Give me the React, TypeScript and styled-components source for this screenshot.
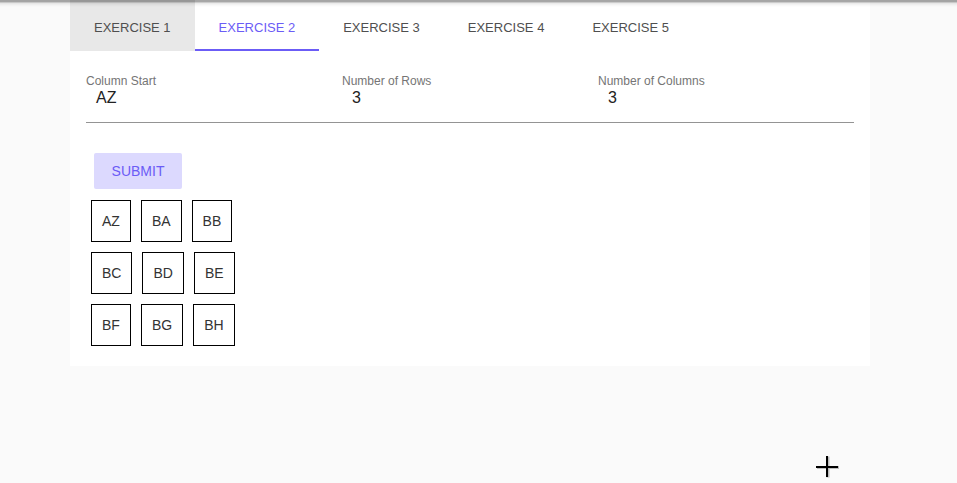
import React, { useState } from "react";
import styled, { createGlobalStyle } from "styled-components";

const GlobalStyle = createGlobalStyle`
  html, body { margin: 0; padding: 0; background: #fafafa; }
  body { font-family: "Liberation Sans", Arial, sans-serif; color: #222; }
`;

const TopShadow = styled.div`
  position: fixed;
  top: 0;
  left: 0;
  right: 0;
  height: 7px;
  pointer-events: none;
  background: linear-gradient(
    to bottom,
    rgba(0, 0, 0, 0.28) 0px,
    rgba(0, 0, 0, 0.42) 1px,
    rgba(0, 0, 0, 0.2) 2.5px,
    rgba(0, 0, 0, 0.08) 3.5px,
    rgba(0, 0, 0, 0.03) 5px,
    rgba(0, 0, 0, 0) 7px
  );
`;

const Page = styled.div`
  min-height: 483px;
  padding-left: 70px;
`;

const Card = styled.div`
  width: 800px;
  background: #fff;
  padding-bottom: 20px;
`;

const TabBar = styled.div`
  display: flex;
  height: 51px;
`;

const Tab = styled.button<{ $active?: boolean; $hover?: boolean }>`
  appearance: none;
  border: none;
  margin: 0;
  padding: 3px 24px 0;
  height: 51px;
  display: flex;
  align-items: center;
  font-family: "Liberation Sans", Arial, sans-serif;
  font-size: 13px;
  text-transform: uppercase;
  color: ${(p) => (p.$active ? "#6b5cf6" : "#4f4f4f")};
  background: ${(p) => (p.$hover ? "#e8e8e8" : "transparent")};
  box-shadow: ${(p) => (p.$active ? "inset 0 -2px 0 #6b5cf6" : "none")};
  cursor: pointer;
`;

const Form = styled.div`
  padding: 23px 16px 0;
`;

const FieldRow = styled.div`
  display: grid;
  grid-template-columns: repeat(3, 256px);
  border-bottom: 1px solid #949494;
  padding-bottom: 15px;
`;

const Field = styled.label`
  display: flex;
  flex-direction: column;
`;

const Label = styled.span`
  font-size: 12px;
  line-height: 14px;
  color: #757575;
`;

const Value = styled.span`
  font-size: 16px;
  line-height: 19px;
  color: #222;
  padding: 0 10px;
`;

const Actions = styled.div`
  padding: 30px 24px 0;
`;

const SubmitButton = styled.button`
  appearance: none;
  border: none;
  border-radius: 2px;
  width: 88px;
  height: 36px;
  background: #dcd9fe;
  color: #6b5cf6;
  font-family: "Liberation Sans", Arial, sans-serif;
  font-size: 14px;
  text-transform: uppercase;
  cursor: pointer;
`;

const Grid = styled.div`
  display: flex;
  flex-direction: column;
  gap: 10px;
  padding: 11px 21px 0;
`;

const GridRow = styled.div`
  display: flex;
  gap: 10px;
`;

const Cell = styled.div`
  border: 1px solid #000;
  padding: 12px 10px;
  font-size: 14px;
  line-height: 16px;
  color: #333;
`;

const Cursor = styled.svg`
  position: fixed;
  left: 815px;
  top: 455px;
  pointer-events: none;
`;

const tabs = ["Exercise 1", "Exercise 2", "Exercise 3", "Exercise 4", "Exercise 5"];
const rows = [
  ["AZ", "BA", "BB"],
  ["BC", "BD", "BE"],
  ["BF", "BG", "BH"],
];

export default function App() {
  const [active, setActive] = useState(1);
  return (
    <>
      <GlobalStyle />
      <Page>
        <Card>
          <TabBar>
            {tabs.map((t, i) => (
              <Tab key={t} $active={i === active} $hover={i === 0} onClick={() => setActive(i)}>
                {t}
              </Tab>
            ))}
          </TabBar>
          <Form>
            <FieldRow>
              <Field>
                <Label>Column Start</Label>
                <Value>AZ</Value>
              </Field>
              <Field>
                <Label>Number of Rows</Label>
                <Value>3</Value>
              </Field>
              <Field>
                <Label>Number of Columns</Label>
                <Value>3</Value>
              </Field>
            </FieldRow>
          </Form>
          <Actions>
            <SubmitButton>Submit</SubmitButton>
          </Actions>
          <Grid>
            {rows.map((r, ri) => (
              <GridRow key={ri}>
                {r.map((c) => (
                  <Cell key={c}>{c}</Cell>
                ))}
              </GridRow>
            ))}
          </Grid>
        </Card>
      </Page>
      <TopShadow />
      <Cursor width="24" height="24" viewBox="0 0 24 24">
        <path d="M13 1.5v21M2 12.5h22" stroke="#bdbdbd" strokeWidth="3" />
        <path d="M12 1v21M1 12h22" stroke="#000" strokeWidth="2" />
      </Cursor>
    </>
  );
}
